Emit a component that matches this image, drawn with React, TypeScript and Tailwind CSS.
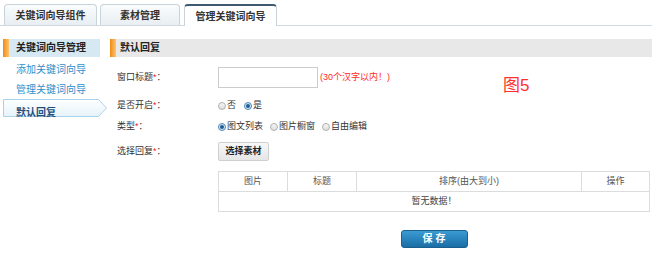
import React from "react";

const Radio = ({ checked = false }: { checked?: boolean }) => (
  <span
    className={`inline-flex items-center justify-center w-[8px] h-[8px] rounded-full border ${
      checked ? "border-[#4f86b3] bg-[#d5e8f6]" : "border-[#b0b0b0] bg-gradient-to-b from-[#f6f6f6] to-[#dedede]"
    }`}
  >
    {checked && <span className="w-[4px] h-[4px] rounded-full bg-[#1d5d97]" />}
  </span>
);

const Label = ({ text }: { text: string }) => (
  <div className="w-[101px] text-[9px] text-[#333]">
    {text}
    <span className="text-[#ff2020]">*</span>：
  </div>
);

const Tab = ({ title, width, active = false }: { title: string; width: string; active?: boolean }) => (
  <div
    className={`${width} flex items-center justify-center rounded-t-[4px] border border-b-0 text-[10px] font-bold text-[#333] ${
      active
        ? "h-[22px] -mb-px bg-white border-[#c8d3da] border-t-2 border-t-[#3d5a70]"
        : "h-[21px] bg-gradient-to-b from-[#fafcfd] to-[#e8eef2] border-[#c8d3da]"
    }`}
  >
    {title}
  </div>
);

export default function App() {
  return (
    <div className="relative w-[660px] h-[254px] bg-white overflow-hidden font-['Liberation_Sans','Noto_Sans_CJK_SC',sans-serif] text-[#333]">
      {/* tabs */}
      <div className="flex items-end pl-[4px] pt-[4px] w-[652px] h-[26px] border-b border-[#cfd8de]">
        <Tab title="关键词向导组件" width="w-[93px]" />
        <div className="w-[3px]" />
        <Tab title="素材管理" width="w-[80px]" />
        <div className="w-[4px]" />
        <Tab title="管理关键词向导" width="w-[93px]" active />
      </div>

      <div className="flex pt-[13px]">
        {/* sidebar */}
        <div className="ml-[3px] w-[104px]">
          <div className="flex h-[18px] w-[97px] bg-[#d6e9f2]">
            <span className="w-[6px] h-full bg-gradient-to-r from-[#ef8a00] to-[#fcc56c]" />
            <span className="pl-[7px] text-[10px] font-bold leading-[18px] text-[#222]">关键词向导管理</span>
          </div>
          <div className="mt-[3px] h-[20px] pl-[13px] text-[10px] leading-[20px] text-[#2f8fcb]">添加关键词向导</div>
          <div className="h-[20px] pl-[13px] text-[10px] leading-[20px] text-[#2f8fcb]">管理关键词向导</div>
          <div className="relative -mt-[1px] h-[18px] w-[104px]">
            <svg className="absolute inset-0" width="104" height="18" viewBox="0 0 104 18">
              <defs>
                <linearGradient id="sel" x1="0" y1="0" x2="0" y2="1">
                  <stop offset="0" stopColor="#ffffff" />
                  <stop offset="1" stopColor="#e6f3fa" />
                </linearGradient>
              </defs>
              <polygon points="0.5,0.5 95.5,0.5 103.5,9 95.5,17.5 0.5,17.5" fill="url(#sel)" stroke="#a9d3ea" />
            </svg>
            <span className="relative pl-[13px] text-[10px] font-bold leading-[18px] text-[#1f4f7e]">默认回复</span>
          </div>
        </div>

        {/* main */}
        <div className="ml-[3px] w-[542px]">
          <div className="flex h-[18px] bg-[#e8e8e8]">
            <span className="w-[6px] h-full bg-gradient-to-r from-[#ef8a00] to-[#fcc56c]" />
            <span className="pl-[4px] text-[10px] font-bold leading-[18px] text-[#222]">默认回复</span>
          </div>

          <div className="pl-[7px]">
            <div className="mt-[10px] flex items-center h-[21px]">
              <Label text="窗口标题" />
              <div className="w-[100px] h-[21px] border border-[#cccccc] bg-white" />
              <span className="ml-[2px] text-[9px] text-[#ff2a2a]">(30个汉字以内！)</span>
            </div>

            <div className="mt-[11px] flex items-center h-[14px]">
              <Label text="是否开启" />
              <div className="flex items-center text-[9px] gap-[8px]">
                <span className="flex items-center gap-[1px]">
                  <Radio />否
                </span>
                <span className="flex items-center gap-[1px]">
                  <Radio checked />是
                </span>
              </div>
            </div>

            <div className="mt-[7px] flex items-center h-[14px]">
              <Label text="类型" />
              <div className="flex items-center text-[9px] gap-[7px]">
                <span className="flex items-center gap-[1px]">
                  <Radio checked />图文列表
                </span>
                <span className="flex items-center gap-[1px]">
                  <Radio />图片橱窗
                </span>
                <span className="flex items-center gap-[1px]">
                  <Radio />自由编辑
                </span>
              </div>
            </div>

            <div className="mt-[8px] flex items-center h-[19px]">
              <Label text="选择回复" />
              <button className="w-[51px] h-[19px] rounded-[2px] border border-[#cfcfcf] bg-gradient-to-b from-[#f7f7f7] to-[#e6e6e6] text-[9px] font-bold text-[#222]">
                选择素材
              </button>
            </div>

            <div className="ml-[101px] w-[432px]">
              <table className="mt-[10px] w-[432px] border-collapse text-[9px] text-[#555]">
                <thead>
                  <tr className="h-[20px]">
                    <th className="w-[69px] border border-[#dcdcdc] font-normal">图片</th>
                    <th className="w-[69px] border border-[#dcdcdc] font-normal">标题</th>
                    <th className="w-[225px] border border-[#dcdcdc] font-normal">排序(由大到小)</th>
                    <th className="border border-[#dcdcdc] font-normal">操作</th>
                  </tr>
                </thead>
                <tbody>
                  <tr className="h-[20px]">
                    <td colSpan={4} className="border border-[#dcdcdc] text-center text-[#444]">
                      暂无数据！
                    </td>
                  </tr>
                </tbody>
              </table>
              <div className="mt-[18px] flex justify-center">
                <button className="w-[67px] h-[18px] rounded-[3px] border border-[#1b5f8e] bg-gradient-to-b from-[#3a9bd2] to-[#1a6ea6] text-[10px] font-bold text-white leading-none">
                  保&nbsp;存
                </button>
              </div>
            </div>
          </div>
        </div>
      </div>

      {/* annotation */}
      <span className="absolute left-[503px] top-[77px] text-[17px] leading-none text-[#ff3030]">图5</span>
    </div>
  );
}
